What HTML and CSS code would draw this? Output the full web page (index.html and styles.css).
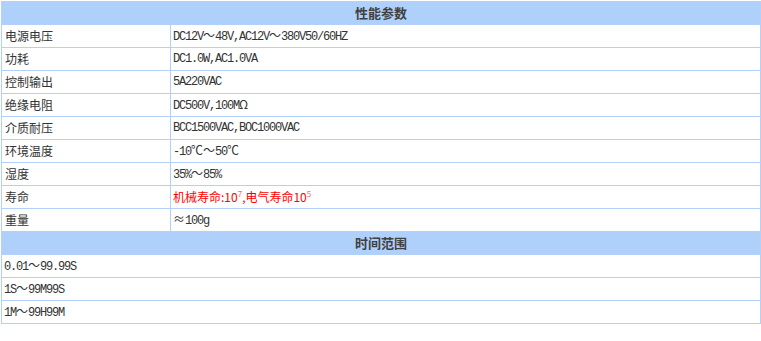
FILE: index.html
```html
<!DOCTYPE html>
<html lang="zh">
<head>
<meta charset="utf-8">
<title>性能参数</title>
<link rel="stylesheet" href="styles.css">
</head>
<body>
<div class="wrap">
<table class="spec">
  <tr><th colspan="2">性能参数</th></tr>
  <tr><td class="k">电源电压</td><td class="v">DC12V<span class="w">～</span>48V,AC12V<span class="w">～</span>380V50/60HZ</td></tr>
  <tr><td class="k">功耗</td><td class="v">DC1.0W,AC1.0VA</td></tr>
  <tr><td class="k">控制输出</td><td class="v">5A220VAC</td></tr>
  <tr><td class="k">绝缘电阻</td><td class="v">DC500V,100M<span class="w">Ω</span></td></tr>
  <tr><td class="k">介质耐压</td><td class="v">BCC1500VAC,BOC1000VAC</td></tr>
  <tr><td class="k">环境温度</td><td class="v">-10<span class="w">℃～</span>50<span class="w">℃</span></td></tr>
  <tr><td class="k">湿度</td><td class="v">35%<span class="w">～</span>85%</td></tr>
  <tr><td class="k">寿命</td><td class="red">机械寿命:10<sup>7</sup>,电气寿命10<sup>5</sup></td></tr>
  <tr><td class="k">重量</td><td class="v"><span class="w">≈</span>100g</td></tr>
  <tr><th colspan="2" class="h2">时间范围</th></tr>
  <tr><td colspan="2" class="v">0.01<span class="w">～</span>99.99S</td></tr>
  <tr><td colspan="2" class="v">1S<span class="w">～</span>99M99S</td></tr>
  <tr><td colspan="2" class="v">1M<span class="w">～</span>99H99M</td></tr>
</table>
</div>
</body>
</html>
```
FILE: styles.css
```css
html, body {
  margin: 0;
  padding: 0;
  background: #ffffff;
}
.wrap {
  padding: 1px 0 0 1px;
}
.spec {
  width: 760px;
  border-collapse: collapse;
  font-family: "Noto Sans CJK SC", "Liberation Sans", sans-serif;
  font-size: 12px;
  color: #333333;
}
.spec th,
.spec td {
  border: 1px solid #b2d0f9;
  padding: 0 2px;
  height: 22px;
  line-height: 14px;
  text-align: left;
  vertical-align: middle;
  white-space: nowrap;
}
.spec th {
  background: #b0d0fc;
  text-align: center;
  font-size: 13px;
  font-weight: bold;
  color: #404040;
}
.spec td.k {
  width: 163px;
  padding-left: 3px;
}
.spec td.v {
  font-family: "Liberation Mono", "DejaVu Sans Mono", monospace;
  font-size: 12px;
  letter-spacing: -1.2px;
}
.spec td.v .w {
  font-family: "Noto Sans CJK SC", sans-serif;
  font-size: 12px;
  letter-spacing: 0;
  line-height: 1;
}
.spec td.red {
  color: #ff0000;
  font-size: 12px;
}
.spec sup {
  font-size: 8px;
  line-height: 0;
  vertical-align: 5px;
  color: #ff6666;
}
```
